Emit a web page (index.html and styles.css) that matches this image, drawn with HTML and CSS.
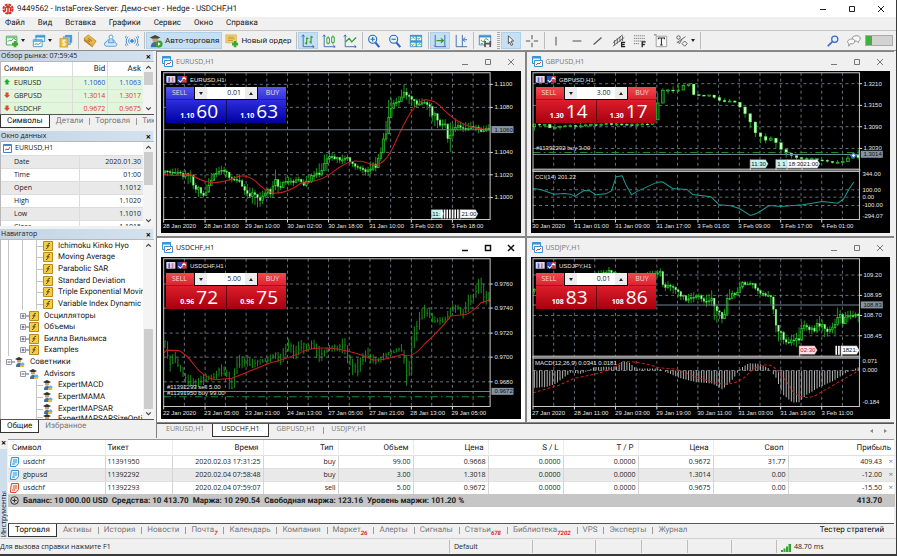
FILE: index.html
```
<!DOCTYPE html>
<html lang="ru">
<head>
    <meta charset="UTF-8">
    <meta name="viewport" content="width=device-width, initial-scale=1.0">
    <title>9449562 - InstaForex-Server: Демо-счет - Hedge - USDCHF,H1</title>
    <link rel="stylesheet" href="styles.css">
</head>
<body>
    <header class="titlebar">
        <svg class="logo" viewBox="0 0 12 12"><circle cx="6" cy="6" r="4.6" fill="none" stroke="#d42a20" stroke-width="2" stroke-dasharray="2.6 1"/><path d="M6 11V4M3.4 8.5V5L6 3l2.600 2v3.500" fill="none" stroke="#d42a20" stroke-width="1.500"/></svg>
        <span class="title">9449562 - InstaForex-Server: Демо-счет - Hedge - USDCHF,H1</span>
        <div class="win-buttons main-buttons">
            <button aria-label="Свернуть"><svg viewBox="0 0 8 8"><path d="M1 4.500h6"/></svg></button>
            <button aria-label="Развернуть"><svg viewBox="0 0 8 8"><path d="M1.500 1.500h5v5h-5z"/></svg></button>
            <button aria-label="Закрыть"><svg viewBox="0 0 8 8"><path d="M1 1l6 6M7 1L1 7"/></svg></button>
        </div>
    </header>
    <nav class="menu">
        <a href="#">Файл</a><a href="#">Вид</a><a href="#">Вставка</a><a href="#">Графики</a><a href="#">Сервис</a><a href="#">Окно</a><a href="#">Справка</a>
    </nav>
    <div class="toolbar">
        <button class="drop" aria-label="Новый график"><svg viewBox="0 0 16 16"><path d="M1.500 2.500h12v10h-12z" fill="#fff" stroke="#3d9b4a"/><path d="M1 4h13" stroke="#7cc686" stroke-width="2"/><path d="M3 9l2-2 2 1 3-3 3 2" fill="none" stroke="#2f9140"/><path d="M8 11.500h7M11.500 8v7" stroke="#3cab2c" stroke-width="3"/></svg><i class="caret"></i></button>
        <button class="drop" aria-label="Профили"><svg viewBox="0 0 16 16"><path d="M4.500 1.500h10v7h-10z" fill="#e9f5ff" stroke="#3d93d0"/><path d="M4 3h11" stroke="#3d93d0" stroke-width="2"/><path d="M1.500 6.500h10v8h-10z" fill="#fff" stroke="#3d93d0"/><path d="M1 8h11" stroke="#58aee4" stroke-width="2"/><path d="M3 12l2-1 2 1 3-2" fill="none" stroke="#2f9140"/></svg><i class="caret"></i></button>
        <button aria-label="Символы"><svg viewBox="0 0 16 16"><path d="M7 1h8v9H7z" fill="#4d9ddd"/><path d="M5 3h8v9H5z" fill="#8cc6ef" stroke="#3d83c0" stroke-width=".6"/><path d="M1 5h9v10H1z" fill="#f0bc3c" stroke="#c28a16" stroke-width=".6"/><path d="M7.500 7.500C5 6.500 3.500 7.500 4 9s3.500 1 3.500 2.500-2 1.500-4 .8M5.600 6.500v7.500" fill="none" stroke="#fff"/></svg></button>
        <hr>
        <button aria-label="Маркет"><svg viewBox="0 0 16 16"><path d="M1 5l5-4 9 7-4 6z" fill="#e8b64a" stroke="#a97718" stroke-width=".7"/><path d="M1 5l10 9v1.500L1 8z" fill="#b98424"/><path d="M6 5l4 3M5 7l3 2" stroke="#8a5a10"/></svg></button>
        <button aria-label="Облако"><svg viewBox="0 0 16 16"><path d="M3 14a2.500 2.500 0 010-5C3 7 5 6 7 7c4-2 6 1 5.500 3 3 0 3 4 0 4z" fill="#d6ebfb" stroke="#4a96d4"/><circle cx="8" cy="3.500" r="2.300" fill="#fff" stroke="#4a96d4"/><path d="M6 6l-1 4h6l-1-4" fill="#b9dcf6" stroke="#4a96d4"/></svg></button>
        <button aria-label="Сигналы"><svg viewBox="0 0 16 16" fill="none" stroke="#4089d2" stroke-width="1.100"><circle cx="8" cy="8" r="1.600" fill="#4089d2"/><path d="M5.500 5a4 4 0 000 6M10.500 5a4 4 0 010 6M3.500 3a7 7 0 000 10M12.500 3a7 7 0 010 10M1.500 2a9 9 0 000 12M14.500 2a9 9 0 010 12"/></svg></button>
        <hr>
        <button class="wide on"><svg viewBox="0 0 16 16"><path d="M1 4l6-3 6 3-6 3z" fill="#444"/><path d="M4 5v3c2 2 4 2 6 0V5" fill="#c9a072"/><path d="M2 15c0-4 2-6 5-6s5 2 5 6z" fill="#3d6f9c"/><circle cx="11.500" cy="11.500" r="4" fill="#36a42c"/><path d="M10.300 9.500v4l3-2z" fill="#fff"/></svg>Авто-торговля</button>
        <button class="wide"><svg viewBox="0 0 16 16"><path d="M1 1h12v9H1z" fill="#f3d672" stroke="#c9a13c" stroke-width=".7"/><path d="M3 3.500h8M3 5.500h8M3 7.500h6" stroke="#a9822a" stroke-width=".8"/><path d="M8 11.500h7M11.500 8v7" stroke="#3cab2c" stroke-width="3"/></svg>Новый ордер</button>
        <hr>
        <button class="on" aria-label="Бары"><svg viewBox="0 0 16 16" fill="none"><path d="M2.500 1v13.500H15M1 3l1.500-2L4 3M13 13l2 1.500-2 1.500" stroke="#2c68b4"/><path d="M6.500 4v8M4.500 10.500h2M6.500 5h2M11.500 2v9M9.500 9h2M11.500 3.500h2" stroke="#2d9a32" stroke-width="1.300"/></svg></button>
        <button aria-label="Свечи"><svg viewBox="0 0 16 16" fill="none"><path d="M2.500 1v13.500H15M1 3l1.500-2L4 3M13 13l2 1.500-2 1.500" stroke="#2c68b4"/><path d="M5.500 4.500h3v6h-3zM7 2.500v2M7 10.500V12M11 3.500h3v6h-3zM12.500 1.500v2M12.500 9.500V12" stroke="#2d9a32"/></svg></button>
        <button aria-label="Линия"><svg viewBox="0 0 16 16" fill="none"><path d="M2.500 1v13.500H15M1 3l1.500-2L4 3M13 13l2 1.500-2 1.500" stroke="#2c68b4"/><path d="M3 9l4-4 3 4 5-5" stroke="#2d9a32" stroke-width="1.500"/></svg></button>
        <hr>
        <button aria-label="Приблизить"><svg viewBox="0 0 16 16" fill="none" stroke="#2c68c4"><path d="M9 9l5 6" stroke-width="2.500"/><circle cx="6.500" cy="6" r="4.600" fill="#e6f2fd" stroke-width="1.300"/><path d="M4 6h5M6.500 3.500v5" stroke-width="1.300"/></svg></button>
        <button aria-label="Отдалить"><svg viewBox="0 0 16 16" fill="none" stroke="#2c68c4"><path d="M9 9l5 6" stroke-width="2.500"/><circle cx="6.500" cy="6" r="4.600" fill="#e6f2fd" stroke-width="1.300"/><path d="M4 6h5" stroke-width="1.300"/></svg></button>
        <button aria-label="Плитка"><svg viewBox="0 0 16 16"><path d="M1 1h14v14H1z" fill="#3d93d0"/><path d="M2 3h5.500v4H2zM9 3h5v4H9zM2 10h5.500v4H2zM9 10h5v4H9z" fill="#fff"/><path d="M2.500 6l2-2 2 1M9.500 5l2 1 2-2M2.500 12l2 1 2-2M9.500 13l2-2 2 1" fill="none" stroke="#2d9a32"/></svg></button>
        <hr>
        <button class="on" aria-label="Автопрокрутка"><svg viewBox="0 0 16 16" fill="none"><path d="M2.500 1v13.500H15M13.500 1v13.500M1 13l1.500 1.500" stroke="#2c68b4"/><path d="M4 7.500h7M9 5l3 2.500L9 10" stroke="#2d9a32" stroke-width="1.300"/></svg></button>
        <button aria-label="Сдвиг"><svg viewBox="0 0 16 16" fill="none" stroke="#2c68b4"><path d="M2.500 1v13.500H15M9.500 1v13.500"/><path d="M15 6.500h-4M13 4l-3 2.500L13 9"/></svg></button>
        <hr>
        <button aria-label="Шаблоны"><svg viewBox="0 0 16 16"><path d="M1.500 1.500h13v11h-13z" fill="#fff" stroke="#3d83c0"/><path d="M1 3h14" stroke="#3d93d0" stroke-width="2"/><path d="M3 7l3 2 3-4 3 2M3 11h3" fill="none" stroke="#2d9a32"/><path d="M7 8h8v7H7z" fill="#555"/><path d="M9 8h4v2H9zM9 12h4v3H9z" fill="#eee"/></svg></button>
        <hr class="grip">
        <button class="on" aria-label="Курсор"><svg viewBox="0 0 16 16"><path d="M5 2l6 6-3 .2 2 4-1.800.8-1.800-4L5 11z" fill="#fff" stroke="#444"/></svg></button>
        <button aria-label="Перекрестие"><svg viewBox="0 0 16 16"><path d="M8 1v5M8 10v5M1 8h5M10 8h5" stroke="#555" stroke-width="1.200"/></svg></button>
        <hr>
        <button aria-label="Вертикаль"><svg viewBox="0 0 16 16"><path d="M8 3v10" stroke="#555" stroke-width="1.200"/></svg></button>
        <button aria-label="Горизонталь"><svg viewBox="0 0 16 16"><path d="M3 8h10" stroke="#555" stroke-width="1.200"/></svg></button>
        <button aria-label="Тренд"><svg viewBox="0 0 16 16"><path d="M3 12l9-8" stroke="#555" stroke-width="1.200"/></svg></button>
        <button aria-label="Канал"><svg viewBox="0 0 16 16"><path d="M1 10L12 1M1 14L14 4M3 7v6M6 5v6M9 3v6M12 2v6" fill="none" stroke="#555"/><path d="M15 9.500h-4v5h4M11 12h3.500" fill="none" stroke="#222" stroke-width="1.500"/></svg></button>
        <button aria-label="Фибоначчи"><svg viewBox="0 0 16 16"><path d="M1 2h13M1 5h13M1 8h13M1 11h6" stroke="#777" stroke-dasharray="1.500 .7"/><path d="M14.500 9h-4v6M10.500 12h3" fill="none" stroke="#222" stroke-width="1.500"/></svg></button>
        <button aria-label="Текст"><svg viewBox="0 0 16 16"><path d="M2.500 2.500h12v12h-12z" fill="#f8f8f8" stroke="#999"/><path d="M5 6V4.500h7V6M8.500 4.500v8M7 12.500h3" fill="none" stroke="#333" stroke-width="1.200"/><path d="M0 1h3" stroke="#555"/></svg></button>
        <button class="drop" aria-label="Объекты"><svg viewBox="0 0 16 16" fill="none" stroke="#555"><circle cx="4" cy="4" r="2"/><path d="M2 10l10-7M3 9l2 2 3-5"/><path d="M11 8l3 3-3 3-3-3z"/></svg><i class="caret"></i></button>
        <hr>
        <div class="tools-right">
            <button aria-label="Поиск"><svg viewBox="0 0 16 16" fill="none" stroke="#3a66d0"><path d="M7 9l-5 5" stroke-width="2"/><circle cx="10" cy="6" r="3.500" fill="#eaf2ff" stroke-width="1.400"/></svg></button>
            <button aria-label="Чат"><svg viewBox="0 0 16 16" fill="#f8f8f8" stroke="#888"><path d="M7 3c4-2 9-1 8 3-1 2-2 2-2 4l-2-2c-5 1-6-3-4-5z"/><path d="M1 8c1-3 8-3 8 0 0 2-2 4-5 3l-2 3v-3c-1-1-2-2-1-3z"/></svg></button>
            <div class="battery"></div>
        </div>
    </div>

    <main class="main">
        <aside class="sidebar">
            <section class="panel">
                <h2 class="caption">Обзор рынка: 07:59:45<button aria-label="Закрыть">×</button></h2>
                <div class="scroll-box market">
                    <table class="quotes">
                        <thead><tr><th>Символ</th><th>Bid</th><th>Ask</th></tr></thead>
                        <tbody>
                            <tr class="up"><td><svg viewBox="0 0 6 6"><path d="M3 0l3 3H4.500v2.500h-3V3H0z" fill="#27a82a"/></svg>EURUSD</td><td>1.1060</td><td>1.1063</td></tr>
                            <tr class="down"><td><svg viewBox="0 0 6 6"><path d="M3 6L0 3h1.500V.5h3V3H6z" fill="#e0492c"/></svg>GBPUSD</td><td>1.3014</td><td>1.3017</td></tr>
                            <tr class="down"><td><svg viewBox="0 0 6 6"><path d="M3 6L0 3h1.500V.5h3V3H6z" fill="#e0492c"/></svg>USDCHF</td><td>0.9672</td><td>0.9675</td></tr>
                        </tbody>
                    </table>
                    <div class="scrollbar"><svg viewBox="0 0 6 6"><path d="M1 4l2-2 2 2"/></svg><div class="track"><div class="thumb thumb-market"></div></div><svg viewBox="0 0 6 6"><path d="M1 2l2 2 2-2"/></svg></div>
                </div>
                <div class="tabs"><a class="active" href="#">Символы</a><a href="#">Детали</a><a href="#">Торговля</a><a href="#">Тики</a></div>
            </section>

            <section class="panel">
                <h2 class="caption">Окно данных<button aria-label="Закрыть">×</button></h2>
                <div class="scroll-box data">
                    <table class="values">
                        <thead><tr><th colspan="2"><svg viewBox="0 0 9 9"><path d="M.5.500h8v8h-8z" fill="#fff" stroke="#3d83c0"/><path d="M1 1.500h7" stroke="#3d93d0"/><path d="M2 6l2-1 1 1 2-3" fill="none" stroke="#d8402c"/></svg>EURUSD,H1</th></tr></thead>
                        <tbody>
                            <tr><td>Date</td><td>2020.01.30</td></tr>
                            <tr><td>Time</td><td>01:00</td></tr>
                            <tr><td>Open</td><td>1.1012</td></tr>
                            <tr><td>High</td><td>1.1020</td></tr>
                            <tr><td>Low</td><td>1.1010</td></tr>
                            <tr><td>Close</td><td>1.1015</td></tr>
                        </tbody>
                    </table>
                    <div class="scrollbar"><svg viewBox="0 0 6 6"><path d="M1 4l2-2 2 2"/></svg><div class="track"><div class="thumb thumb-data"></div></div><svg viewBox="0 0 6 6"><path d="M1 2l2 2 2-2"/></svg></div>
                </div>
            </section>

            <section class="panel navigator">
                <h2 class="caption">Навигатор<button aria-label="Закрыть">×</button></h2>
                <div class="scroll-box grow">
                    <ul class="tree" id="tree"></ul>
                    <div class="scrollbar"><svg viewBox="0 0 6 6"><path d="M1 4l2-2 2 2"/></svg><div class="track end"><div class="thumb thumb-nav"></div></div><svg viewBox="0 0 6 6"><path d="M1 2l2 2 2-2"/></svg></div>
                </div>
                <div class="tabs"><a class="active" href="#">Общие</a><a href="#">Избранное</a></div>
            </section>
        </aside>

        <div class="workspace">
            <div class="charts" id="charts"></div>
            <div class="tabs chart-tabs"><a href="#">EURUSD,H1</a><a class="active" href="#">USDCHF,H1</a><a href="#">GBPUSD,H1</a><a href="#">USDJPY,H1</a><span class="arrows"><i></i><i></i></span></div>
        </div>
    </main>

    <section class="toolbox">
        <div class="strip"><button aria-label="Закрыть">×</button><span>Инструменты</span></div>
        <div class="toolbox-body">
            <table class="trades">
                <colgroup><col class="c-symbol"><col class="c-ticket"><col class="c-time"><col><col><col><col><col><col><col><col class="c-profit"></colgroup>
                <thead>
                    <tr><th>Символ</th><th>Тикет</th><th>Время</th><th>Тип</th><th>Объем</th><th>Цена</th><th>S / L</th><th>T / P</th><th>Цена</th><th>Своп</th><th>Прибыль</th></tr>
                </thead>
                <tbody>
                    <tr><td><svg class="doc" viewBox="0 0 9 10"><path d="M1.500.5h7v6L6 9.500H.5v-3z"/><path d="M3 3h4M3 5h4M2 7h3"/></svg>usdchf</td><td>11391950</td><td>2020.02.03 17:31:25</td><td>buy</td><td>99.00</td><td>0.9668</td><td>0.0000</td><td>0.0000</td><td>0.9672</td><td>31.77</td><td>409.43<button aria-label="Закрыть позицию">×</button></td></tr>
                    <tr><td><svg class="doc" viewBox="0 0 9 10"><path d="M1.500.5h7v6L6 9.500H.5v-3z"/><path d="M3 3h4M3 5h4M2 7h3"/></svg>gbpusd</td><td>11392292</td><td>2020.02.04 07:58:48</td><td>buy</td><td>3.00</td><td>1.3018</td><td>0.0000</td><td>0.0000</td><td>1.3014</td><td>0.00</td><td>-12.00<button aria-label="Закрыть позицию">×</button></td></tr>
                    <tr><td><svg class="doc sell" viewBox="0 0 9 10"><path d="M1.500.5h7v6L6 9.500H.5v-3z"/><path d="M3 3h4M3 5h4M2 7h3"/></svg>usdchf</td><td>11392293</td><td>2020.02.04 07:59:07</td><td>sell</td><td>5.00</td><td>0.9672</td><td>0.0000</td><td>0.0000</td><td>0.9675</td><td>0.00</td><td>-15.50<button aria-label="Закрыть позицию">×</button></td></tr>
                </tbody>
                <tfoot>
                    <tr><td colspan="10"><svg class="plus" viewBox="0 0 9 9"><circle cx="4.500" cy="4.500" r="3.800"/><path d="M2.500 4.500h4M4.500 2.500v4"/></svg>Баланс: 10 000.00 USD&nbsp; Средства: 10 413.70&nbsp; Маржа: 10 290.54&nbsp; Свободная маржа: 123.16&nbsp; Уровень маржи: 101.20 %</td><td>413.70</td></tr>
                </tfoot>
            </table>
            <div class="tabs toolbox-tabs"><a class="active" href="#">Торговля</a><a href="#">Активы</a><a href="#">История</a><a href="#">Новости</a><a href="#">Почта<sub>7</sub></a><a href="#">Календарь</a><a href="#">Компания</a><a href="#">Маркет<sub>26</sub></a><a href="#">Алерты</a><a href="#">Сигналы</a><a href="#">Статьи<sub>678</sub></a><a href="#">Библиотека<sub>7202</sub></a><a href="#">VPS</a><a href="#">Эксперты</a><a href="#">Журнал</a><a class="tester" href="#">Тестер стратегий</a></div>
        </div>
    </section>

    <footer class="status">
        <span class="help">Для вызова справки нажмите F1</span>
        <span class="profile">Default</span>
        <span></span><span></span><span></span><span></span><span></span>
        <span class="ping"><svg viewBox="0 0 10 8"><path d="M0 8V6h2v2zM2.500 8V4.500h2V8zM5 8V2.500h2V8zM7.500 8V0h2.500v8z" fill="#2fa52b"/></svg>48.70 ms</span>
    </footer>

    <script src="charts.js"></script>
</body>
</html>
```

FILE: styles.css
```
* {
    box-sizing: border-box;
}
body {
    margin: 0;
    border-right: 1px solid #3a3a3a;
    border-bottom: 2px solid #3a3a3a;
    background: #f0f0f0;
    color: #222;
    font-family: "Open Sans", "Noto Sans", sans-serif;
    font-size: 7px;
    line-height: 10px;
}
a {
    color: inherit;
    text-decoration: none;
}
button {
    padding: 0;
    border: none;
    background: none;
    color: inherit;
    font: inherit;
}
table {
    border-collapse: collapse;
}
th {
    font-weight: normal;
}
.title,
.menu,
.toolbar,
.tabs,
.tree,
.quotes th,
.trades th,
.trades tfoot {
    font-family: Roboto, "Open Sans", sans-serif;
    font-size: 8px;
    text-rendering: geometricPrecision;
}

/* title, menu, toolbar */
.titlebar {
    display: flex;
    align-items: center;
    height: 17px;
    padding: 0 2px;
    background: #fff;
}
.titlebar .title {
    flex: 1;
}
.logo {
    width: 12px;
    height: 12px;
    margin-right: 3px;
}
.win-buttons {
    display: flex;
    gap: 15px;
}
.win-buttons button {
    width: 8px;
    height: 8px;
}
.win-buttons svg {
    display: block;
    fill: none;
    stroke: currentColor;
}
.main-buttons {
    gap: 21px;
    padding-right: 9px;
}
.menu {
    display: flex;
    gap: 13px;
    height: 13px;
    padding: 1px 5px;
}
.toolbar {
    display: flex;
    align-items: center;
    height: 21px;
    padding: 0 3px 0 2px;
    border-top: 1px solid #c4c4c4;
    border-bottom: 1px solid #8c8c8c;
}
.toolbar button {
    display: flex;
    flex: none;
    align-items: center;
    justify-content: center;
    width: 20px;
    height: 17px;
    margin-right: 1px;
}
.toolbar svg {
    flex: none;
    width: 14px;
    height: 14px;
}
.toolbar .on {
    background: #c6dff2;
    border: 1px solid #aed0ea;
}
.toolbar .drop {
    gap: 2px;
    width: 26px;
}
.toolbar .wide {
    gap: 2px;
    width: auto;
    padding: 0 2px;
}
.caret {
    border: 2px solid transparent;
    border-top: 3px solid #222;
    border-bottom: none;
}
.toolbar hr {
    flex: none;
    width: 1px;
    height: 17px;
    margin: 0 1px 0 1px;
    border: none;
    background: #bdbdbd;
}
.toolbar .grip {
    width: 3px;
    margin: 0 1px;
    background: repeating-linear-gradient(#aaa 0 1px, #f0f0f0 1px 2px);
}
.tools-right {
    display: flex;
    align-items: center;
    margin-left: auto;
}
.battery {
    width: 28px;
    height: 11px;
    border: 1px solid #aaa;
    background: linear-gradient(90deg, #3fb13f 6px, #d2d2d2 6px);
}

/* left side */
.main {
    display: flex;
}
.sidebar {
    display: flex;
    flex: none;
    flex-direction: column;
    width: 157px;
    padding: 0 2px 5px 0;
    border-right: 1px solid #808080;
}
.panel {
    margin-bottom: 3px;
}
.caption {
    display: flex;
    justify-content: space-between;
    height: 10px;
    margin: 0 1px 0 0;
    padding: 0 2px 0 1px;
    background: linear-gradient(90deg, #c4d4e4, #d4e2ef);
    font-size: 7px;
    font-weight: normal;
    line-height: 10px;
}
.caption button,
.strip button {
    color: #000;
    font-size: 9px;
    font-weight: bold;
    line-height: 9px;
}
.scroll-box {
    display: flex;
    overflow: hidden;
    background: #fff;
    border: 1px solid #b8b8b8;
    border-width: 1px 0 0 1px;
}
.scroll-box table {
    flex: 1;
}
.market {
    height: 53px;
}
.quotes,
.values {
    table-layout: fixed;
    align-self: flex-start;
}
.quotes th,
.quotes td {
    width: 35px;
    height: 13px;
    padding: 0 2px;
    border-left: 1px solid #dcdcdc;
    text-align: right;
}
.quotes th {
    height: 14px;
}
.quotes th:first-child,
.quotes td:first-child {
    width: 71px;
    border-left: none;
    padding-left: 3px;
    text-align: left;
}
.quotes td {
    background: #e2f6de;
    border-top: 1px solid #d5e6d2;
}
.quotes svg {
    width: 6px;
    height: 6px;
    margin-right: 4px;
}
.quotes .up td + td {
    color: #2450d8;
}
.quotes .down td + td {
    color: #dc3a26;
}
.scrollbar {
    display: flex;
    flex: none;
    flex-direction: column;
    align-items: center;
    width: 11px;
    padding: 2px 0;
    background: #f4f4f4;
}
.scrollbar svg {
    flex: none;
    width: 7px;
    height: 7px;
    fill: none;
    stroke: #444;
}
.track {
    display: flex;
    flex: 1;
    flex-direction: column;
    width: 9px;
    padding: 1px 0;
}
.track.end {
    justify-content: flex-end;
}
.thumb {
    background: #cdcdcd;
}
.thumb-market {
    height: 13px;
}
.thumb-data {
    height: 33px;
}
.thumb-nav {
    height: 80px;
}
.tabs {
    display: flex;
    height: 14px;
    overflow: hidden;
    border-top: 1px solid #555;
    color: #7a7a7a;
    line-height: 12px;
    white-space: nowrap;
}
.tabs a {
    padding: 0 6px;
    position: relative;
}
.tabs a + a:not(.active)::before {
    content: "";
    position: absolute;
    left: 0;
    top: 3px;
    height: 7px;
    border-left: 1px solid #999;
}
.tabs .active {
    margin-top: -1px;
    background: #fff;
    border: 1px solid #333;
    border-top-color: #fff;
    color: #111;
}
.tabs .active + a::before {
    display: none;
}
.data {
    height: 85px;
}
.values th {
    height: 13px;
    padding: 0 2px;
    line-height: 9px;
    text-align: left;
}
.values svg {
    width: 9px;
    height: 9px;
    margin-right: 3px;
    vertical-align: middle;
}
.values td {
    width: 64px;
    height: 13px;
    padding: 0 2px;
    border-top: 1px solid #dcdcdc;
    border-left: 1px solid #dcdcdc;
    text-align: right;
}
.values td:first-child {
    width: 78px;
    padding-left: 13px;
    border-left: none;
    text-align: left;
}
.values tr:nth-child(odd) td {
    background: #e9e9e9;
}
.navigator {
    display: flex;
    flex: 1;
    flex-direction: column;
    margin-bottom: 0;
}
.grow {
    flex: 1;
}
.tree {
    display: grid;
    flex: 1;
    grid-template-rows: repeat(15, 1fr) 5px;
    min-width: 0;
    margin: 0;
    padding: 0;
    overflow: hidden;
    list-style: none;
    white-space: nowrap;
}
.tree li {
    display: flex;
    align-items: center;
    min-height: 0;
}
.tree li:last-child {
    align-items: flex-start;
}
.tree i {
    position: relative;
    flex: none;
    align-self: stretch;
    width: 14px;
}
.tree i.line::before,
.tree i.leaf::before {
    content: "";
    position: absolute;
    left: 7px;
    top: 0;
    bottom: 0;
    border-left: 1px solid #c4c4c4;
}
.tree i.leaf::after {
    content: "";
    position: absolute;
    left: 7px;
    right: 0;
    top: 50%;
    border-top: 1px solid #c4c4c4;
}
.tree svg {
    flex: none;
    width: 10px;
    height: 10px;
    margin-right: 5px;
}
.tree svg.box {
    width: 14px;
    margin: 0;
}

/* chart windows */
.workspace {
    flex: 1;
    min-width: 0;
    padding-right: 2px;
}
.charts {
    display: grid;
    grid-template-columns: 1fr 1fr;
    gap: 2px;
    padding: 1px 0;
    background: #858585;
}
.window {
    min-width: 0;
    padding: 0 4px 3px;
    background: #f0f0f0;
    color: #777;
}
.window.current {
    background: #fff;
    color: #111;
}
.window-title {
    display: flex;
    align-items: center;
    height: 19px;
    padding-right: 6px;
}
.window-title svg.win-icon {
    width: 11px;
    height: 11px;
    margin: 0 3px 0 1px;
}
.window-title h3 {
    flex: 1;
    margin: 0;
    font-size: 7px;
    font-weight: normal;
}
.current .win-buttons {
    stroke-width: 1.5;
}
.chart {
    position: relative;
    background: #000;
}
.plot {
    display: block;
    width: 100%;
    height: auto;
}
.plot text {
    fill: #e4e4e4;
    font-family: "Liberation Sans", sans-serif;
    font-size: 6px;
}
.plot .dark {
    fill: #111;
}
.plot .pink {
    fill: #a02030;
}
.ticket {
    position: absolute;
    left: 5px;
    top: 16px;
    display: grid;
    grid-template-columns: 27px minmax(0, 1fr) 27px;
    width: 120px;
    background: linear-gradient(#f04a50, #d81c28 40%, #a80010);
    color: #fff;
}
.ticket.blue {
    background: linear-gradient(#5858f0, #2a2ad8 40%, #0000a0);
}
.ticket .side {
    height: 13px;
    border-bottom: 1px solid rgba(0, 0, 0, 0.3);
    color: #f4dede;
}
.volume {
    display: flex;
    height: 13px;
    margin: 0 1px;
    border: 1px solid #000;
    border-top: none;
    background: #ececec;
}
.volume button {
    display: flex;
    flex: none;
    align-items: center;
    justify-content: center;
    width: 12px;
}
.volume button:last-child i {
    transform: rotate(180deg);
}
.volume input {
    flex: 1;
    width: 100%;
    min-width: 0;
    padding: 0 4px;
    border: none;
    background: #fff;
    color: #222;
    font: inherit;
    text-align: right;
}
.prices {
    display: grid;
    grid-column: 1 / 4;
    grid-template-columns: 1fr 1fr;
}
.prices button {
    display: flex;
    align-items: baseline;
    justify-content: flex-end;
    gap: 2px;
    height: 23px;
    padding: 0 8px 0 0;
    font-size: 7px;
    font-weight: bold;
    line-height: 23px;
}
.prices button + button {
    border-left: 1px solid rgba(0, 0, 0, 0.5);
}
.prices big {
    font-size: 19px;
    font-weight: normal;
}
.chart-tabs {
    height: 15px;
    padding-left: 1px;
    font-family: "Open Sans", sans-serif;
    font-size: 7px;
}
.chart-tabs a {
    padding: 0 8px;
}
.chart-tabs .active {
    height: 14px;
}
.arrows {
    display: flex;
    gap: 11px;
    align-items: center;
    margin-left: auto;
    padding-right: 7px;
}
.arrows i {
    border: 2px solid transparent;
    border-left: 3px solid #888;
    border-right: none;
}
.arrows i:first-child {
    transform: rotate(180deg);
}

/* toolbox */
.toolbox {
    display: flex;
    margin: 1px 2px 0 0;
}
.strip {
    display: flex;
    flex: none;
    flex-direction: column;
    justify-content: space-between;
    align-items: center;
    width: 7px;
    margin-right: 1px;
    background: linear-gradient(#f0f0f0 10px, #cfdeec 10px);
}
.strip button {
    line-height: 7px;
}
.strip span {
    line-height: 7px;
    writing-mode: vertical-rl;
    transform: rotate(180deg);
}
.toolbox-body {
    flex: 1;
    min-width: 0;
    background: #fff;
    border-top: 1px solid #999;
}
.trades {
    width: 100%;
    table-layout: fixed;
    margin-bottom: 16px;
}
.trades col {
    width: 75px;
}
.trades .c-symbol {
    width: 97px;
}
.trades .c-ticket {
    width: 67px;
}
.trades .c-time {
    width: 91px;
}
.trades .c-profit {
    width: 107px;
}
.trades th,
.trades td {
    height: 13px;
    padding: 0 2px;
    border-left: 1px solid #d4d4d4;
    text-align: right;
    white-space: nowrap;
}
.trades th {
    height: 15px;
    padding-right: 4px;
    border-left-color: #ececec;
}
.trades th:nth-child(2),
.trades td:nth-child(2),
.trades th:first-child,
.trades td:first-child {
    text-align: left;
}
.trades th:first-child,
.trades td:first-child {
    border-left: none;
}
.trades th:first-child {
    padding-left: 4px;
}
.trades tbody td {
    border-top: 1px solid #e0e0e0;
}
.trades tbody tr:nth-child(2) td {
    background: #e9e9e9;
}
.trades tfoot td,
.trades tfoot td:nth-child(2) {
    background: #c6c6c6;
    border: none;
    font-weight: bold;
    text-align: right;
}
.trades tfoot td:nth-child(2) {
    padding-right: 13px;
}
.trades button {
    width: 11px;
    color: #777;
    font-size: 8px;
    line-height: 8px;
    text-align: right;
}
.doc {
    width: 9px;
    height: 10px;
    margin-right: 4px;
    fill: #dff0fc;
    stroke: #3d93d0;
    vertical-align: middle;
}
.doc.sell {
    fill: #fdeae6;
    stroke: #e0492c;
}
.plus {
    width: 9px;
    height: 9px;
    margin-right: 4px;
    fill: none;
    stroke: #333;
    vertical-align: middle;
}
.toolbox-tabs {
    background: #f0f0f0;
}
.toolbox-tabs sub {
    color: #dc2a2a;
    font-size: 6px;
    font-style: italic;
    font-weight: bold;
    line-height: 6px;
}
.tabs .tester {
    margin-left: auto;
    padding-right: 10px;
    color: #111;
}
.tabs .tester::before {
    display: none;
}

/* status bar */
.status {
    display: grid;
    grid-template-columns: 449px 83px 63px 46px 46px 44px 45px 1fr;
    height: 16px;
    margin-top: 1px;
    padding: 1px 0;
    border-top: 1px solid #d0d0d0;
    line-height: 13px;
}
.status span + span {
    padding-left: 4px;
    border-left: 1px solid #bdbdbd;
}
.status svg {
    width: 10px;
    height: 8px;
    margin-right: 3px;
    vertical-align: middle;
}
```

FILE: charts.js
```
// plot data is kept in thirds of a pixel: [x, y, spread] along the price curve
const U = 3;

const windows = [
    {
        name: 'EURUSD,H1', blue: true, lot: '0.01', sell: ['1.10', '60'], buy: ['1.10', '63'],
        ox: 12, oy: 63, top: 68, bottom: 508, main: 508, step: 7.7,
        hlines: [[103, '1.1100'], [172, '1.1080'], [307, '1.1040'], [374, '1.1020'], [442, '1.1000']],
        price: [239, '1.1060'],
        times: ['28 Jan 2020', '28 Jan 18:00', '29 Jan 10:00', '30 Jan 02:00', '30 Jan 18:00', '31 Jan 10:00', '3 Feb 02:00', '3 Feb 18:00'],
        curve: [[20, 368, 10], [60, 362, 8], [80, 375, 15], [100, 380, 20], [112, 410, 20], [125, 420, 20], [140, 435, 12], [155, 400, 20], [175, 370, 12], [190, 360, 10], [205, 362, 12], [220, 385, 10], [250, 388, 12], [262, 420, 20], [280, 430, 20], [300, 450, 22], [315, 448, 20], [325, 430, 20], [345, 422, 18], [355, 390, 40], [365, 412, 15], [390, 390, 12], [410, 395, 12], [425, 385, 8], [440, 400, 12], [465, 380, 18], [490, 362, 22], [510, 330, 25], [525, 318, 12], [545, 330, 12], [570, 325, 10], [590, 345, 10], [610, 355, 8], [630, 365, 15], [640, 352, 15], [655, 345, 20], [670, 310, 25], [685, 250, 30], [695, 180, 50], [705, 160, 12], [720, 160, 14], [735, 130, 20], [742, 120, 15], [755, 145, 16], [775, 160, 12], [805, 155, 8], [820, 185, 25], [835, 205, 30], [845, 220, 12], [865, 225, 14], [875, 270, 45], [885, 240, 30], [900, 225, 18], [920, 232, 12], [950, 228, 12], [970, 240, 10], [990, 235, 10]],
        ma: 'M20 373L50 376L100 373Q140 397 170 398Q205 395 235 382Q265 370 295 393Q325 425 350 429Q390 430 430 400Q480 395 515 375Q570 330 600 333Q620 333 650 346Q685 345 715 275Q765 160 800 150Q830 145 860 180Q920 240 998 237',
        tags: [[823, 478, 28, '11:', 'mint'], [851, 478, 55, '', 'bars'], [908, 478, 46, '21:00', 'white']]
    },
    {
        name: 'GBPUSD,H1', lot: '3.00', sell: ['1.30', '14'], buy: ['1.30', '17'],
        ox: 16, oy: 63, top: 68, bottom: 508, main: 357, sub: 364, step: 15.4, big: true,
        hlines: [[101, '1.3210'], [166, '1.3150'], [230, '1.3090'], [295, '1.3030']],
        price: [313, '1.3014'],
        times: ['30 Jan 2020', '31 Jan 01:00', '31 Jan 09:00', '31 Jan 17:00', '3 Feb 01:00', '3 Feb 09:00', '3 Feb 17:00', '4 Feb 01:00'],
        curve: [[25, 230, 16], [40, 224, 4], [70, 228, 12], [100, 232, 8], [125, 226, 5], [150, 230, 6], [165, 226, 10], [200, 226, 6], [250, 222, 6], [375, 222, 6], [388, 175, 24], [395, 150, 24], [410, 125, 12], [440, 122, 14], [455, 118, 14], [470, 108, 4], [488, 104, 6], [502, 134, 3], [560, 138, 5], [580, 148, 14], [600, 154, 6], [625, 152, 6], [645, 170, 12], [660, 190, 20], [675, 225, 20], [690, 255, 14], [705, 265, 18], [740, 265, 8], [750, 285, 22], [765, 302, 14], [785, 317, 8], [815, 323, 6], [870, 330, 6], [900, 332, 5], [925, 338, 6], [950, 332, 10], [970, 320, 10], [985, 315, 16]],
        marker: true,
        note: [[300, '#11392292 buy 3.00']], order: 307,
        tags: [[673, 328, 46, '11:30', 'mint'], [750, 328, 32, '1 1', 'mint'], [783, 328, 45, '18:30', 'white'], [828, 328, 46, '21:00', 'white']],
        subTitle: 'CCI(14) 201.22',
        subAxis: [[373, '344.00'], [419, '100.00'], [441, '0.00'], [466, '-100.00'], [499, '-294.07']], subLines: [419, 441, 466],
        cci: 'M22 415L45 418L85 432L115 430L135 432L147 439L175 421L192 422L210 434L240 431L257 422L271 380L289 377L300 403L317 434L335 423L395 396L410 395L440 415L483 418L500 433L555 440L580 464L615 467L640 475L673 496L692 490L730 466L765 469L830 464L890 454L935 459L952 447L968 418L983 396'
    },
    {
        name: 'USDCHF,H1', current: true, lot: '5.00', sell: ['0.96', '72'], buy: ['0.96', '75'],
        ox: 12, oy: 68, top: 73, bottom: 516, main: 516, step: 7.7, bars: true,
        hlines: [[149, '0.9760'], [221, '0.9740'], [296, '0.9720'], [368, '0.9700'], [442, '0.9680']],
        price: [471, '0.9672'],
        times: ['22 Jan 2020', '23 Jan 05:00', '23 Jan 21:00', '24 Jan 13:00', '27 Jan 05:00', '27 Jan 21:00', '28 Jan 13:00', '29 Jan 05:00'],
        curve: [[22, 325, 22], [30, 350, 20], [40, 390, 35], [52, 365, 20], [65, 395, 20], [80, 420, 18], [95, 440, 18], [120, 445, 20], [145, 432, 14], [170, 425, 14], [190, 405, 22], [210, 415, 16], [222, 455, 34], [230, 430, 40], [240, 385, 22], [265, 380, 20], [285, 390, 18], [310, 380, 10], [335, 375, 12], [355, 362, 14], [370, 375, 22], [385, 345, 25], [398, 325, 18], [412, 360, 30], [430, 335, 28], [450, 338, 14], [470, 330, 16], [482, 365, 32], [500, 355, 14], [520, 340, 12], [545, 340, 12], [558, 330, 34], [575, 375, 30], [598, 405, 30], [615, 375, 20], [630, 355, 18], [650, 378, 16], [670, 375, 14], [690, 358, 10], [715, 350, 8], [735, 340, 12], [748, 420, 34], [757, 405, 24], [764, 330, 45], [775, 285, 40], [790, 255, 30], [800, 228, 18], [815, 240, 20], [835, 260, 10], [860, 258, 14], [880, 225, 14], [900, 218, 14], [920, 235, 20], [935, 200, 24], [950, 183, 16], [970, 150, 34], [980, 190, 34], [995, 185, 16]],
        ma: 'M20 355L30 347L65 348Q90 360 110 390Q140 430 175 436L225 431Q290 405 340 385Q400 370 440 350Q475 335 550 345Q620 360 645 376Q670 380 735 360Q765 375 800 330Q850 285 880 245L925 240Q950 230 970 205L998 197',
        note: [[465, '#11392293 sell 5.00'], [481, '#11391950 buy 99.00']], order: 487
    },
    {
        name: 'USDJPY,H1', lot: '0.01', sell: ['108', '83'], buy: ['108', '86'],
        ox: 16, oy: 68, top: 73, bottom: 516, main: 365, sub: 371, step: 7.7,
        hlines: [[122, '109.20'], [183, '108.95'], [243, '108.70'], [304, '108.45']],
        price: [212, '108.83'],
        times: ['27 Jan 2020', '28 Jan 11:00', '29 Jan 03:00', '29 Jan 19:00', '30 Jan 11:00', '31 Jan 03:00', '31 Jan 19:00', '3 Feb 11:00'],
        curve: [[25, 170, 10], [100, 150, 10], [235, 115, 8], [250, 110, 10], [265, 118, 8], [330, 135, 10], [405, 118, 14], [413, 155, 14], [430, 152, 10], [445, 165, 14], [465, 185, 12], [485, 195, 12], [505, 188, 16], [520, 188, 8], [545, 205, 20], [555, 182, 24], [568, 240, 26], [580, 240, 20], [590, 260, 12], [605, 195, 26], [615, 178, 12], [630, 182, 10], [640, 155, 12], [650, 148, 12], [670, 146, 6], [690, 158, 12], [710, 180, 10], [730, 180, 10], [745, 225, 20], [752, 290, 28], [765, 300, 20], [780, 320, 14], [800, 318, 14], [820, 305, 26], [835, 272, 18], [855, 288, 10], [870, 280, 18], [885, 262, 18], [900, 298, 14], [915, 280, 12], [930, 270, 26], [938, 225, 24], [948, 262, 18], [960, 248, 14], [985, 240, 10], [998, 252, 14]],
        tags: [[820, 334, 46, '02:30', 'rose'], [928, 334, 18, '', 'bars'], [946, 334, 46, '1821:', 'white']],
        subTitle: 'MACD(12,26,9) 0.0341 0.0181',
        subAxis: [[379, '0.071'], [408, '0.000'], [504, '-0.184']], subLines: [408],
        macd: [[22, 460], [60, 458], [90, 448], [120, 425], [135, 414], [165, 418], [185, 410], [205, 398], [275, 396], [290, 380], [310, 384], [330, 402], [400, 402], [425, 415], [460, 430], [510, 443], [560, 447], [590, 465], [620, 435], [645, 400], [670, 386], [700, 388], [730, 402], [750, 430], [770, 480], [800, 504], [820, 503], [840, 482], [880, 458], [920, 440], [960, 415], [998, 398]],
        signal: 'M22 475L100 452L150 430Q250 415 290 381Q340 380 400 400L450 404Q500 425 560 443Q620 460 660 425Q700 380 740 395Q770 420 800 470Q830 500 870 482L998 408'
    }
];

// small repeatable generator, so that the bars stay the same on every load
function generator(seed) {
    return () => {
        seed = (seed * 16807) % 2147483647;
        return seed / 2147483647;
    };
}

function valueAt(points, x, k) {
    for (let i = 1; i < points.length; i++) {
        if (x <= points[i][0]) {
            const a = points[i - 1], b = points[i];
            return a[k] + (b[k] - a[k]) * (x - a[0]) / (b[0] - a[0]);
        }
    }
    return points[points.length - 1][k];
}

function drawPlot(w, index) {
    const rnd = generator(77 + index * 31);
    const L = w.ox === 16 ? 22 : 20, R = L + 978;
    let g = '', t = '';
    const tx = v => Math.round((v - w.ox) / U);
    const ty = v => Math.round((v - w.oy) / U);
    const line = (x1, y1, x2, y2, c, width = 3, extra = '') =>
        `<path d="M${x1} ${y1}L${x2} ${y2}" stroke="${c}" stroke-width="${width}" ${extra}/>`;
    const text = (x, y, s, cls = '') => `<text x="${tx(x)}" y="${ty(y)}" class="${cls}">${s}</text>`;

    // grid
    for (let i = 1; i < 16; i++) {
        const x = L + Math.round(i * 61.8);
        g += line(x, w.top, x, w.bottom, '#7b8794', 2.5, 'stroke-dasharray="9 9"');
    }
    w.hlines.concat((w.subLines || []).map(y => [y])).forEach(h => {
        g += line(L, h[0], R, h[0], '#7b8794', 2.5, 'stroke-dasharray="9 9"');
    });

    // bars
    let prev = w.curve[0][1];
    for (let x = L + 4; x < R; x += w.step) {
        const spread = valueAt(w.curve, x, 2);
        const mid = valueAt(w.curve, x, 1);
        const close = mid + (rnd() - 0.5) * spread;
        const reach = w.big || w.bars ? 0.4 : 0.6;
        const hi = Math.min(prev, close, mid - spread * (reach + rnd() * 0.7));
        const lo = Math.max(prev, close, mid + spread * (reach + rnd() * 0.7));
        if (w.bars) {
            g += line(x, hi, x, lo, '#1fa81f', 2.5);
            g += line(x, close, x + 3, close, '#1c9a1c', 2.5);
        } else {
            const bw = w.big ? 8 : 5;
            const y = Math.min(prev, close), h = Math.max(3, Math.abs(close - prev));
            g += line(x, hi, x, lo, '#22b422', 2.5);
            g += close > prev
                ? `<rect x="${x - bw / 2}" y="${y}" width="${bw}" height="${h}" fill="#b4ffb4" stroke="#3be03b"/>`
                : `<rect x="${x - bw / 2}" y="${y}" width="${bw}" height="${h}" fill="#0a3c0a" stroke="#2ad02a" stroke-width="2"/>`;
        }
        prev = close;
    }
    if (w.ma) g += `<path d="${w.ma}" fill="none" stroke="#c8201c" stroke-width="3"/>`;
    g += line(L, w.price[0], R, w.price[0], '#708090', 3);
    if (w.order) g += line(L, w.order, R, w.order, '#1f8a2c', 3, 'stroke-dasharray="22 10 5 10"');

    // indicator window
    if (w.sub) {
        g += `<rect x="${L - 3}" y="${w.main}" width="${R - L + 6}" height="${w.sub - w.main}" fill="#666"/>`;
        g += line(L, w.main, R, w.main, '#ddd', 2.5) + line(L, w.sub, R, w.sub, '#ddd', 2.5);
        t += text(L + 7, w.sub + 22, w.subTitle);
        w.subAxis.forEach(a => { t += text(R + 10, a[0] + 6, a[1]); });
    }
    if (w.cci) g += `<path d="${w.cci}" fill="none" stroke="#1f9a94" stroke-width="3"/>`;
    if (w.macd) {
        for (let x = L + 4; x < R; x += w.step) {
            g += line(x, 408, x, valueAt(w.macd, x, 1), '#b4b4b4', 3);
        }
        g += `<path d="${w.signal}" fill="none" stroke="#c8201c" stroke-width="3" stroke-dasharray="9 6"/>`;
    }

    // frame, axis marks and labels
    g += `<path d="M${L} ${w.top}H${R}V${w.bottom}H${L}Z" fill="none" stroke="#c8c8c8" stroke-width="3"/>`;
    w.hlines.forEach(h => {
        g += line(R, h[0], R + 8, h[0], '#ddd');
        t += text(R + 12, h[0] + 6, h[1]);
    });
    g += `<rect x="${R + 4}" y="${w.price[0] - 11}" width="66" height="21" fill="#8494a4"/>`;
    t += text(R + 12, w.price[0] + 6, w.price[1], 'dark');
    w.times.forEach((s, i) => {
        const x = L + Math.round(i * 123.6);
        g += line(x, w.bottom, x, w.bottom + 9, '#ddd');
        t += text(x - 2, w.bottom + 25, s);
    });
    (w.note || []).forEach(n => { t += text(L + 10, n[0], n[1]); });
    (w.tags || []).forEach(([x, y, width, s, kind]) => {
        const fill = { mint: '#c8f4f0', white: '#fff', rose: '#ffe0e4', bars: '#fff' }[kind];
        if (kind === 'bars') {
            for (let i = 0; i < width; i += 8) g += `<rect x="${x + i}" y="${y}" width="5" height="27" fill="#fff"/>`;
        } else {
            g += `<path d="M${x} ${y}h${width}l8 13l-8 13h-${width}z" fill="${fill}" stroke="#333"/>` + line(x, y, x, y + 32, '#fff', 2);
            t += text(x + 3, y + 20, s, kind === 'rose' ? 'pink' : 'dark');
        }
    });
    if (w.marker) g += '<path d="M982 308l8 8l-8 8l-8-8z" fill="#fff" stroke="#2c6cd0" stroke-width="4"/>';

    // header marks
    const hx = L + 8, hy = w.top + 10;
    g += `<rect x="${hx}" y="${hy}" width="27" height="20" fill="#d8d8f4"/><rect x="${hx + 6}" y="${hy + 4}" width="5" height="14" fill="#5a62d0"/><rect x="${hx + 16}" y="${hy + 4}" width="5" height="14" fill="#e07878"/>`;
    g += `<path d="M${hx + 33} ${hy}h14v20h-14z" fill="#2c48c8"/><path d="M${hx + 47} ${hy}h14v20h-14z" fill="#d03a48"/><path d="M${hx + 36} ${hy + 12}l6 6l6-6M${hx + 47} ${hy + 10}l6-6l6 6" fill="none" stroke="#fff" stroke-width="3"/>`;
    t += text(L + 79, w.top + 27, w.name);

    return `<svg class="plot" viewBox="0 0 359 162"><g transform="scale(${1 / U}) translate(${-w.ox} ${-w.oy})">${g}</g>${t}</svg>`;
}

document.getElementById('charts').innerHTML = windows.map((w, i) => `
    <section class="window${w.current ? ' current' : ''}">
        <div class="window-title">
            <svg class="win-icon" viewBox="0 0 11 11"><path d="M.5.500h8v7h-8z" fill="#e8f4ff" stroke="#3d93d0"/><path d="M0 1.500h9" stroke="#3d93d0" stroke-width="2"/><path d="M2.500 4.500h8v6h-8z" fill="#fff" stroke="#3d93d0"/><path d="M4 9l2-2 1 1 2-2" fill="none" stroke="#e0492c"/></svg>
            <h3>${w.name}</h3>
            <div class="win-buttons">
                <button aria-label="Свернуть"><svg viewBox="0 0 8 8"><path d="M1 6.500h6"/></svg></button>
                <button aria-label="Развернуть"><svg viewBox="0 0 8 8"><path d="M1.500 1.500h5v5h-5z"/></svg></button>
                <button aria-label="Закрыть"><svg viewBox="0 0 8 8"><path d="M1 1l6 6M7 1L1 7"/></svg></button>
            </div>
        </div>
        <div class="chart">
            ${drawPlot(w, i)}
            <div class="ticket${w.blue ? ' blue' : ''}">
                <button class="side">SELL</button>
                <div class="volume"><button aria-label="Меньше"><i class="caret"></i></button><input type="text" aria-label="Объем" value="${w.lot}"><button aria-label="Больше"><i class="caret"></i></button></div>
                <button class="side">BUY</button>
                <div class="prices">
                    <button>${w.sell[0]}<big>${w.sell[1]}</big></button>
                    <button>${w.buy[0]}<big>${w.buy[1]}</big></button>
                </div>
            </div>
        </div>
    </section>`).join('');

// navigator tree
const fIcon = '<svg viewBox="0 0 10 10"><path d="M.5.500h9v9h-9z" fill="#f3cf48" stroke="#b98a1c"/><path d="M7 2.500C5.500 2 5 3 5 4.500S4.500 8 3 7.500M3.500 4.800h3" fill="none" stroke="#5a3c00"/></svg>';
const eIcon = '<svg viewBox="0 0 10 10"><path d="M0 2l4-2 4 2-4 2z" fill="#333"/><path d="M2 3v2c1 1 3 1 4 0V3" fill="#c9a072"/><path d="M1 10c0-3 1-4 3-4s4 1 4 4z" fill="#3d6f9c"/><circle cx="7.500" cy="7.500" r="2" fill="#6ab0e8"/><path d="M5 9h4" stroke="#e6b93a" stroke-width="2"/></svg>';
const box = plus => `<svg class="box" viewBox="0 0 14 10"><path d="M5.500 2.500h5v5h-5z" fill="#fff" stroke="#999"/><path d="M6.500 5h3${plus ? 'M8 3.500v3' : ''}M11 5h3" stroke="#4a5a9a"/></svg>`;
const nodes = [
    ['line line leaf', fIcon, 'Ichimoku Kinko Hyo'], ['line line leaf', fIcon, 'Moving Average'], ['line line leaf', fIcon, 'Parabolic SAR'],
    ['line line leaf', fIcon, 'Standard Deviation'], ['line line leaf', fIcon, 'Triple Exponential Moving Average'], ['line line leaf', fIcon, 'Variable Index Dynamic Average'],
    ['line plus', fIcon, 'Осцилляторы'], ['line plus', fIcon, 'Объемы'], ['line plus', fIcon, 'Билла Вильямса'], ['line plus', fIcon, 'Examples'],
    ['minus', eIcon, 'Советники'], ['none minus', eIcon, 'Advisors'],
    ['none none leaf', eIcon, 'ExpertMACD'], ['none none leaf', eIcon, 'ExpertMAMA'], ['none none leaf', eIcon, 'ExpertMAPSAR'], ['none none leaf', eIcon, 'ExpertMAPSARSizeOptimized']
];
document.getElementById('tree').innerHTML = nodes.map(([marks, icon, label]) => {
    const cells = marks.split(' ').map(m => m === 'plus' || m === 'minus' ? box(m === 'plus') : `<i class="${m}"></i>`).join('');
    return `<li>${cells}${icon}${label}</li>`;
}).join('');
```
